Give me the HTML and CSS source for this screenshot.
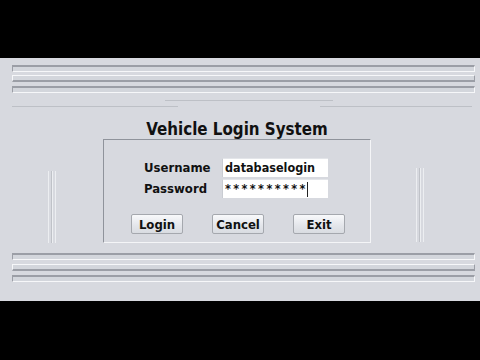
FILE: index.html
```html
<!DOCTYPE html>
<html>
<head>
<meta charset="utf-8">
<link rel="stylesheet" href="styles.css">
</head>
<body>
<div class="screen">
  <div class="letterbox"></div>
  <div class="app">
    <div class="bar bar-in"></div>
    <div class="bar bar-out gap3"></div>
    <div class="bar bar-in gap4"></div>
    <div class="seps">
      <div class="sep sep-a"></div>
      <div class="sep-row">
        <div class="sep sep-b"></div>
        <div class="sep sep-c"></div>
      </div>
    </div>
    <div class="middle">
      <div class="grip grip-left"><span></span><span></span><span></span></div>
      <div class="center">
        <h1 class="title">Vehicle Login System</h1>
        <div class="panel">
          <div class="form">
            <label class="label">Username</label>
            <div class="field">databaselogin</div>
            <label class="label">Password</label>
            <div class="field field-pass">**********<span class="caret"></span></div>
          </div>
          <div class="buttons">
            <button class="btn">Login</button>
            <button class="btn">Cancel</button>
            <button class="btn">Exit</button>
          </div>
        </div>
      </div>
      <div class="grip grip-right"><span></span><span></span><span></span></div>
    </div>
    <div class="bar bar-in gap10"></div>
    <div class="bar bar-out gap4"></div>
    <div class="bar bar-in gap4"></div>
  </div>
  <div class="letterbox letterbox-bottom"></div>
</div>
</body>
</html>
```
FILE: styles.css
```css
html, body {
  margin: 0;
  padding: 0;
  background: #000;
}
.screen {
  width: 480px;
  height: 360px;
  display: flex;
  flex-direction: column;
  font-family: "DejaVu Sans Condensed", "DejaVu Sans", sans-serif;
  font-stretch: semi-condensed;
}
.letterbox {
  height: 58px;
  background: #000;
}
.letterbox-bottom {
  height: 59px;
}
.app {
  height: 243px;
  box-sizing: border-box;
  background: #d7d9df;
  padding: 7px 5px 0 12px;
}
.bar {
  height: 7px;
  box-sizing: border-box;
  background: #d3d6dc;
}
.bar-in {
  border-top: 2px solid #9b9ea6;
  border-left: 1px solid #9b9ea6;
  border-bottom: 1px solid #f6f7f9;
  border-right: 1px solid #f6f7f9;
}
.bar-out {
  border-top: 1px solid #f6f7f9;
  border-left: 1px solid #f6f7f9;
  border-bottom: 2px solid #9b9ea6;
  border-right: 1px solid #9b9ea6;
}
.gap3 { margin-top: 3px; }
.gap4 { margin-top: 4px; }
.gap10 { margin-top: 10px; }
.seps {
  margin-top: 7px;
  height: 7px;
  display: flex;
  flex-direction: column;
  justify-content: space-between;
}
.sep {
  height: 1px;
  background: #bdc0c6;
}
.sep-a {
  margin-left: 153px;
  width: 168px;
}
.sep-row {
  display: flex;
}
.sep-b {
  width: 166px;
}
.sep-c {
  margin-left: 142px;
  width: 152px;
}
.middle {
  display: flex;
  height: 136px;
  padding-left: 36px;
}
.grip {
  display: flex;
  gap: 2px;
  width: 8px;
  align-self: flex-end;
}
.grip span {
  width: 1px;
  height: 100%;
  background: #bfc2c8;
  border-right: 1px solid #eceef1;
}
.grip-left {
  height: 72px;
}
.grip-right {
  height: 74px;
  margin-left: 45px;
  margin-bottom: 1px;
}
.center {
  width: 268px;
  margin-left: 47px;
  display: flex;
  flex-direction: column;
}
.title {
  margin: 12px 0 0;
  font-size: 16.8px;
  line-height: 20px;
  font-weight: bold;
  color: #111;
  text-align: center;
}
.panel {
  height: 104px;
  box-sizing: border-box;
  border-top: 1px solid #8f939b;
  border-left: 1px solid #8f939b;
  border-right: 1px solid #f4f5f7;
  border-bottom: 1px solid #f4f5f7;
  padding: 18px 0 0 40px;
}
.form {
  display: grid;
  grid-template-columns: 78px 106px;
  row-gap: 2px;
  align-items: center;
}
.label {
  font-size: 13px;
  font-weight: bold;
  color: #111;
}
.field {
  height: 19px;
  box-sizing: border-box;
  background: #fff;
  border-left: 1px solid #c9ccd2;
  border-top: 1px solid #e3e5e9;
  padding: 0 0 0 2px;
  font-size: 12.5px;
  font-weight: bold;
  line-height: 18px;
  color: #111;
  white-space: nowrap;
}
.field-pass {
  font-size: 12.5px;
  letter-spacing: 2.4px;
  display: flex;
  align-items: center;
}
.caret {
  display: inline-block;
  width: 1px;
  height: 15px;
  background: #222;
  margin-left: -1px;
}
.buttons {
  display: flex;
  gap: 29px;
  margin: 16px 0 0 -13px;
}
.btn {
  width: 52px;
  height: 20px;
  box-sizing: border-box;
  padding: 0;
  border: 1px solid #a5a8ae;
  border-radius: 2px;
  background: linear-gradient(#f8f9fb, #e3e5ea 60%, #d9dce1);
  font-family: inherit;
  font-stretch: semi-condensed;
  font-size: 13px;
  font-weight: bold;
  color: #111;
}
```
